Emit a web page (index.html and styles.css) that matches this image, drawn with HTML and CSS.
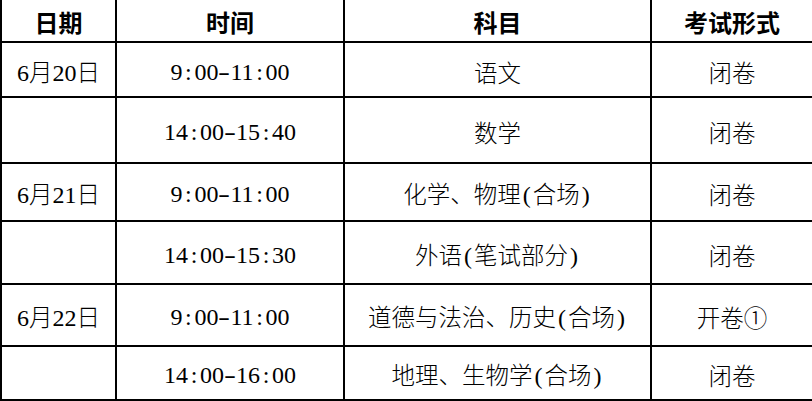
FILE: index.html
```html
<!DOCTYPE html>
<html lang="zh-CN">
<head>
<meta charset="utf-8">
<link rel="stylesheet" href="styles.css">
</head>
<body>
<table class="schedule">
  <colgroup>
    <col class="c-date">
    <col class="c-time">
    <col class="c-subject">
    <col class="c-form">
  </colgroup>
  <thead>
    <tr class="r-head">
      <th>日期</th>
      <th>时间</th>
      <th>科目</th>
      <th>考试形式</th>
    </tr>
  </thead>
  <tbody>
    <tr class="r1">
      <td><span class="num">6</span>月<span class="num">20</span>日</td>
      <td class="num">9<span class="p">:</span>00<span class="p dash">-</span>11<span class="p">:</span>00</td>
      <td>语文</td>
      <td>闭卷</td>
    </tr>
    <tr class="r2">
      <td></td>
      <td class="num">14<span class="p">:</span>00<span class="p dash">-</span>15<span class="p">:</span>40</td>
      <td>数学</td>
      <td>闭卷</td>
    </tr>
    <tr class="r3">
      <td><span class="num">6</span>月<span class="num">21</span>日</td>
      <td class="num">9<span class="p">:</span>00<span class="p dash">-</span>11<span class="p">:</span>00</td>
      <td>化学、物理<span class="num p">(</span>合场<span class="num p">)</span></td>
      <td>闭卷</td>
    </tr>
    <tr class="r4">
      <td></td>
      <td class="num">14<span class="p">:</span>00<span class="p dash">-</span>15<span class="p">:</span>30</td>
      <td>外语<span class="num p">(</span>笔试部分<span class="num p">)</span></td>
      <td>闭卷</td>
    </tr>
    <tr class="r5">
      <td><span class="num">6</span>月<span class="num">22</span>日</td>
      <td class="num">9<span class="p">:</span>00<span class="p dash">-</span>11<span class="p">:</span>00</td>
      <td>道德与法治、历史<span class="num p">(</span>合场<span class="num p">)</span></td>
      <td>开卷①</td>
    </tr>
    <tr class="r6">
      <td></td>
      <td class="num">14<span class="p">:</span>00<span class="p dash">-</span>16<span class="p">:</span>00</td>
      <td>地理、生物学<span class="num p">(</span>合场<span class="num p">)</span></td>
      <td>闭卷</td>
    </tr>
  </tbody>
</table>
</body>
</html>
```

FILE: styles.css
```css
html, body {
  margin: 0;
  padding: 0;
  background: #ffffff;
}

body {
  font-family: "Noto Sans CJK SC", "Noto Sans", sans-serif;
  color: #000000;
  width: 812px;
  height: 401px;
  overflow: hidden;
}

.schedule {
  width: 812px;
  border-collapse: collapse;
  table-layout: fixed;
}

.c-date { width: 115px; }
.c-time { width: 228px; }
.c-subject { width: 307px; }
.c-form { width: 162px; }

.schedule th,
.schedule td {
  border: 2px solid #000000;
  text-align: center;
  vertical-align: middle;
  padding: 4px 0 0 0;
  font-size: 23.5px;
  line-height: 26px;
  font-weight: 300;
  white-space: nowrap;
}

.schedule th {
  border-top: none;
  font-weight: 700;
  font-size: 24px;
  padding-top: 2px;
}

.r-head { height: 42px; }
.r1 { height: 55px; }
.r2 { height: 66px; }
.r3 { height: 58px; }
.r4 { height: 63px; }
.r5 { height: 62px; }
.r6 { height: 54px; }

.schedule .num {
  font-family: "Liberation Serif", "Times New Roman", serif;
  font-size: 24px;
  font-weight: 400;
}

.schedule .p {
  display: inline-block;
  width: 12px;
  text-align: center;
}

.schedule .dash {
  transform: scaleX(1.5);
}
```
